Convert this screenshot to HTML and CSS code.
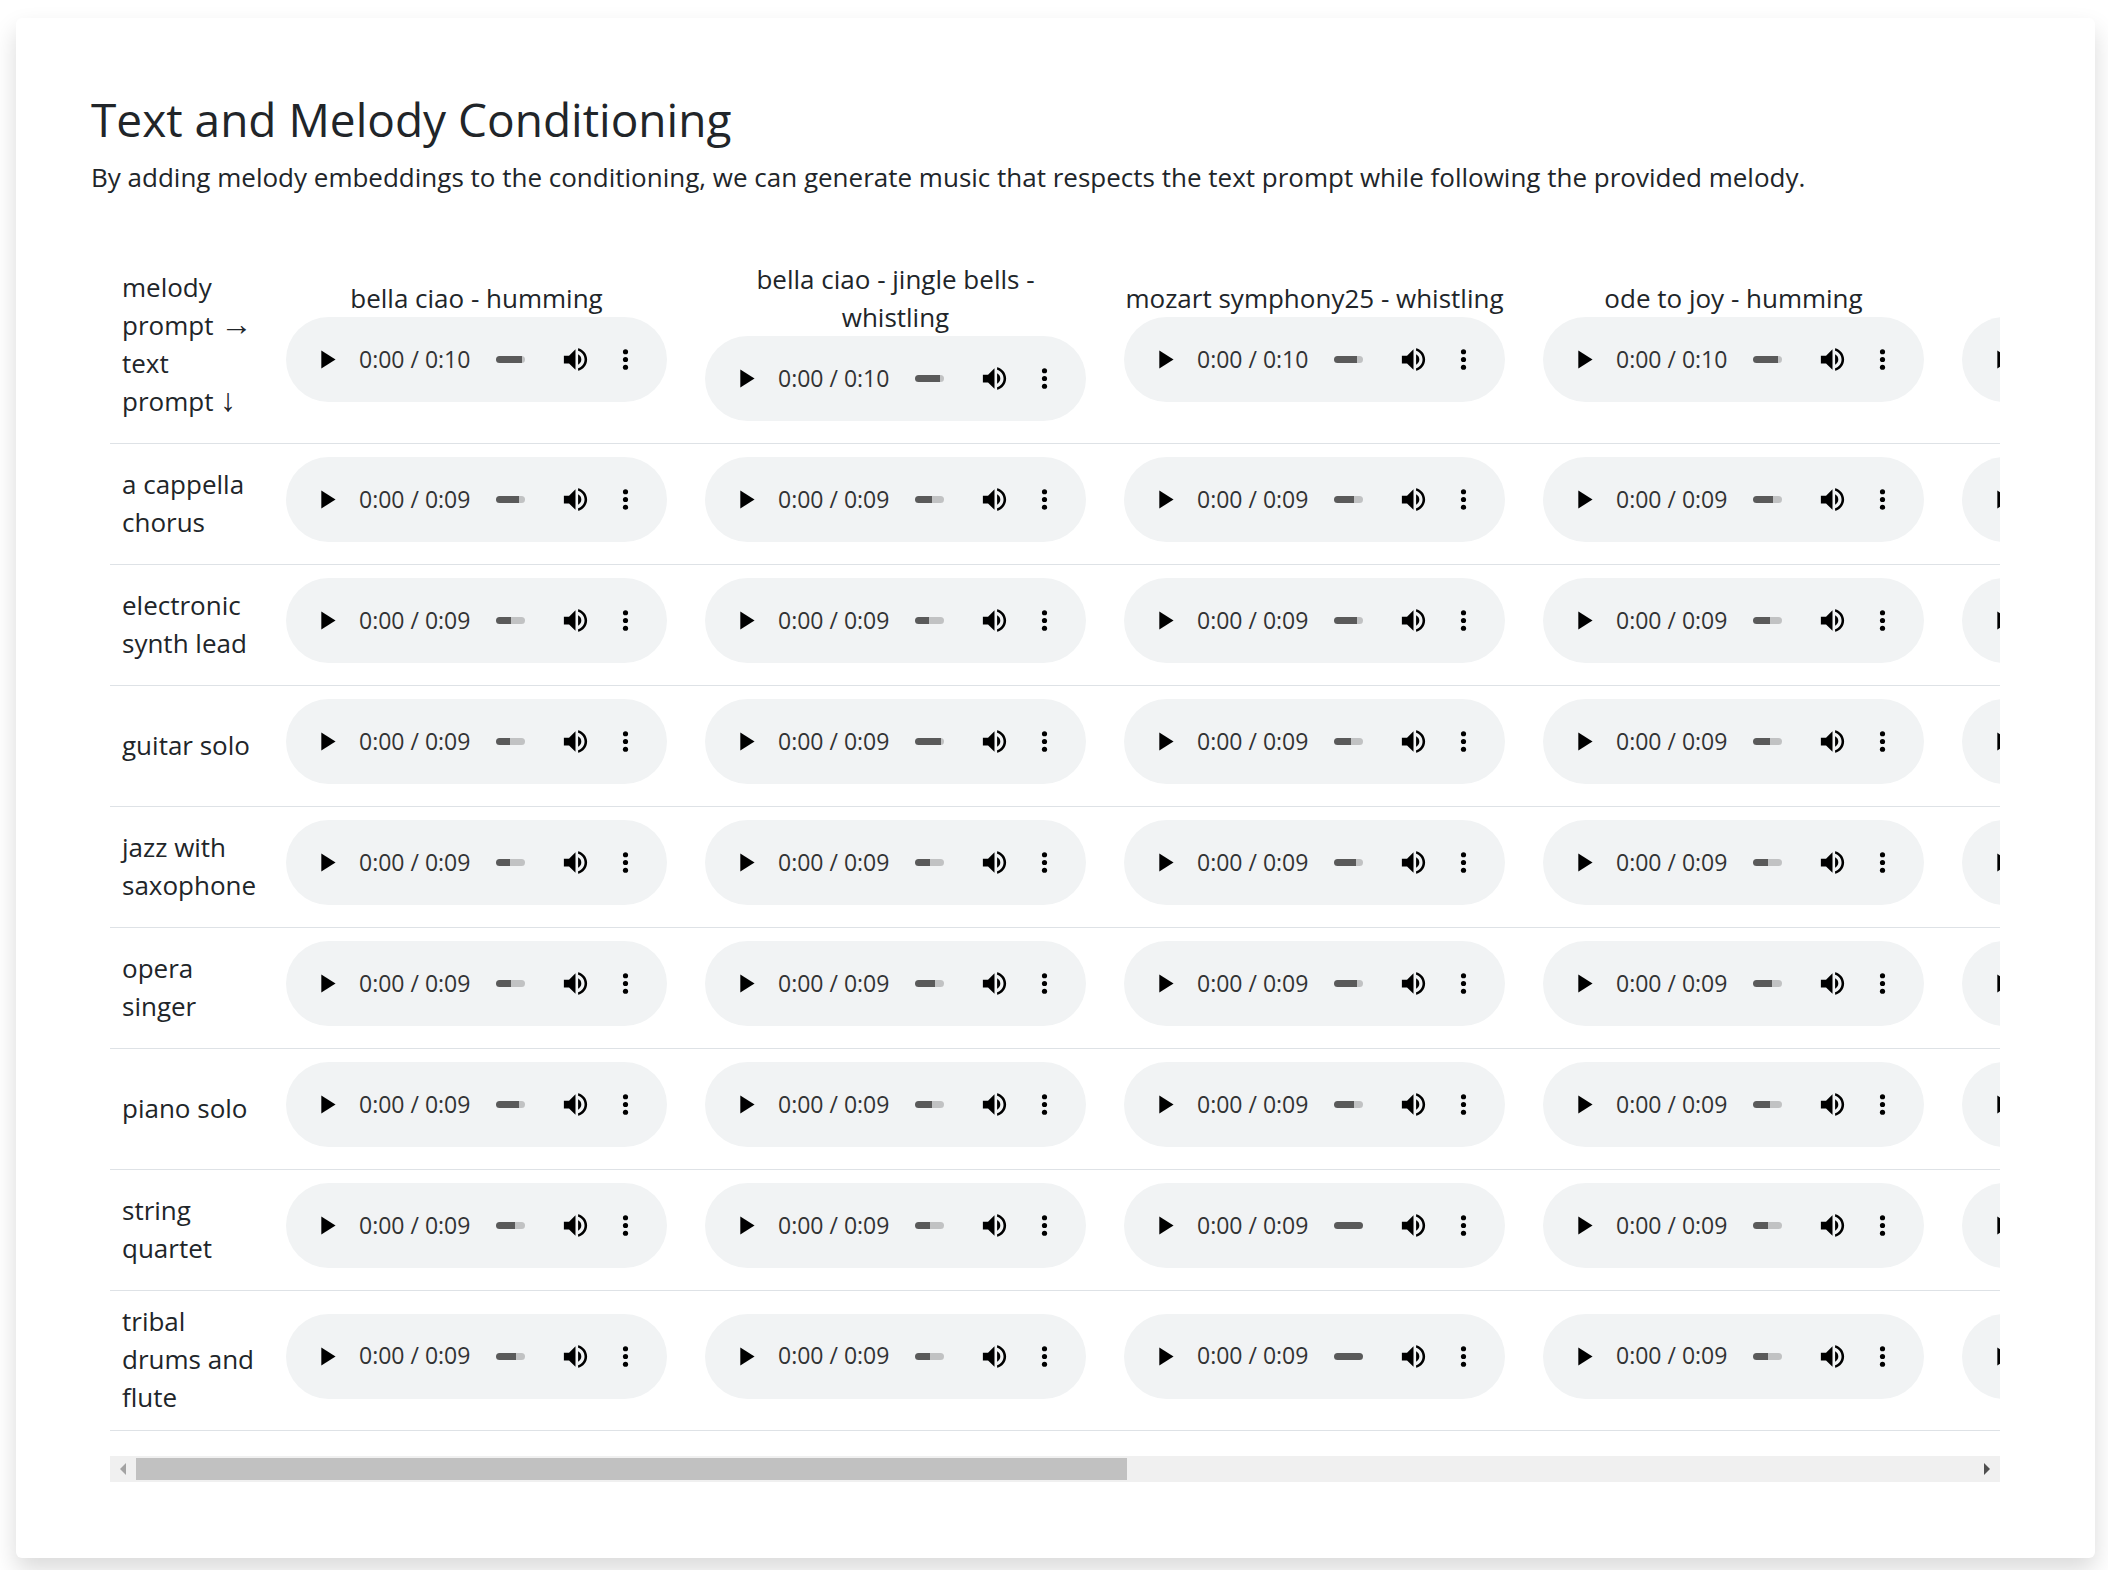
FILE: index.html
```html
<!DOCTYPE html>
<html lang="en">
<head>
<meta charset="utf-8">
<meta name="viewport" content="width=device-width, initial-scale=1">
<title>Text and Melody Conditioning</title>
<link rel="stylesheet" href="styles.css">
</head>
<body>
<svg class="sprite" aria-hidden="true">
  <symbol id="icon-play" viewBox="0 0 24 24"><path d="M8 5v14l11-7z"/></symbol>
  <symbol id="icon-volume" viewBox="0 0 24 24"><path d="M3 9v6h4l5 5V4L7 9H3zm13.500 3c0-1.770-1.020-3.290-2.500-4.030v8.050c1.480-.730 2.500-2.250 2.500-4.020zM14 3.230v2.060c2.890.860 5 3.540 5 6.710s-2.110 5.850-5 6.710v2.060c4.010-.910 7-4.490 7-8.770s-2.990-7.860-7-8.770z"/></symbol>
  <symbol id="icon-menu" viewBox="0 0 24 24"><circle cx="12" cy="6" r="2"/><circle cx="12" cy="12" r="2"/><circle cx="12" cy="18" r="2"/></symbol>
</svg>
<main class="card">
  <h1 class="title">Text and Melody Conditioning</h1>
  <p class="lead">By adding melody embeddings to the conditioning, we can generate music that respects the text prompt while following the provided melody.</p>
  <section class="samples" aria-label="Audio samples">
    <div class="viewport">
      <table class="grid">
        <thead>
          <tr id="melodies">
            <th class="prompt" scope="col">melody prompt <span class="arrow">→</span> text prompt <span class="arrow">↓</span></th>
          </tr>
        </thead>
        <tbody id="rows"></tbody>
      </table>
    </div>
    <div class="scrollbar">
      <button class="scroll-button" type="button" aria-label="Scroll left" disabled><svg class="scroll-arrow" viewBox="0 0 6 12"><path d="M6 0v12L0 6z"/></svg></button>
      <div class="track"><div class="thumb"></div></div>
      <button class="scroll-button" type="button" aria-label="Scroll right"><svg class="scroll-arrow" viewBox="0 0 6 12"><path d="M0 0v12l6-6z"/></svg></button>
    </div>
  </section>
</main>
<script src="script.js"></script>
</body>
</html>
```
FILE: styles.css
```css
* {
  box-sizing: border-box;
}

body {
  margin: 0;
  padding: 18px 13px 12px 16px;
  background: #fff;
  color: #212529;
  font-family: "Segoe UI", "Open Sans", "Noto Sans", sans-serif;
  font-size: 26px;
  line-height: 38px;
}

.sprite {
  display: none;
}

.card {
  padding: 72px 75px 76px;
  border-radius: 6px;
  background: #fff;
  box-shadow: 0 12px 24px rgba(0, 0, 0, 0.15);
}

.title {
  margin: 0 0 10px;
  font-size: 46px;
  font-weight: 400;
  line-height: 58px;
}

.lead {
  margin: 0 0 51px;
}

.samples {
  padding: 0 20px 0 19px;
}

.viewport {
  overflow: hidden;
}

.grid {
  width: max-content;
  margin-bottom: 25px;
  border-collapse: separate;
  border-spacing: 0;
  table-layout: fixed;
}

.grid th,
.grid td {
  padding: 13px 19px 12px;
  border-bottom: 1px solid #dee2e6;
  font-weight: 400;
  vertical-align: middle;
}

.grid .prompt {
  width: 157px;
  padding: 11px 8px 14px 12px;
  text-align: left;
}

.arrow {
  font-family: "Liberation Sans", Arial, sans-serif;
  font-size: 32px;
  line-height: 0;
}

.melody-name {
  min-height: 38px;
  white-space: pre-line;
}

.player {
  display: flex;
  align-items: center;
  width: 381px;
  height: 85px;
  margin-bottom: 10px;
  padding: 0 26px 0 25px;
  border-radius: 43px;
  background: #f1f3f4;
}

.icon-button {
  display: block;
  flex: none;
  width: 31px;
  height: 31px;
  padding: 0;
  border: 0;
  background: none;
  color: #000;
}

.icon {
  display: block;
  width: 31px;
  height: 31px;
  fill: currentColor;
}

.time {
  flex: none;
  width: 137px;
  margin-left: 17px;
  padding-bottom: 2px;
  color: #323334;
  font-size: 23px;
  text-align: left;
}

.timeline {
  flex: 1;
  min-width: 0;
  height: 7px;
  margin: 0 35px 0 0;
  appearance: none;
  border-radius: 4px;
  background: linear-gradient(to right, #5a5a5a var(--buffered), #c1c2c3 var(--buffered));
}

.timeline::-webkit-slider-thumb {
  appearance: none;
  width: 0;
  height: 0;
}

.menu-button {
  margin-left: 19px;
}

.scrollbar {
  display: flex;
  height: 26px;
  background: #f0f0f0;
}

.scroll-button {
  display: flex;
  align-items: center;
  justify-content: center;
  width: 26px;
  padding: 0;
  border: 0;
  background: none;
  color: #505050;
}

.scroll-button:disabled {
  color: #a3a3a3;
}

.scroll-arrow {
  width: 6px;
  height: 12px;
  fill: currentColor;
}

.track {
  flex: 1;
  padding: 2px 0;
}

.thumb {
  width: 53.9%;
  height: 22px;
  background: #c1c1c1;
}
```
FILE: script.js
```js
// Each number is the share of the clip that has been buffered, in percent.
const melodies = [
  { name: "bella ciao - humming", time: "0:00 / 0:10", buffered: 90 },
  { name: "bella ciao - jingle bells -\nwhistling", time: "0:00 / 0:10", buffered: 87 },
  { name: "mozart symphony25 - whistling", time: "0:00 / 0:10", buffered: 80 },
  { name: "ode to joy - humming", time: "0:00 / 0:10", buffered: 86 },
  { name: "", time: "", buffered: 0 }
];

const prompts = [
  { name: "a cappella chorus", buffered: [79, 59, 69, 69, 0] },
  { name: "electronic synth lead", buffered: [51, 48, 80, 58, 0] },
  { name: "guitar solo", buffered: [48, 90, 59, 58, 0] },
  { name: "jazz with saxophone", buffered: [48, 50, 77, 52, 0] },
  { name: "opera singer", buffered: [51, 70, 80, 65, 0] },
  { name: "piano solo", buffered: [78, 59, 69, 58, 0] },
  { name: "string quartet", buffered: [65, 51, 100, 52, 0] },
  { name: "tribal drums and flute", buffered: [68, 51, 100, 52, 0] }
];

const iconButton = (icon, label, extra = "") =>
  `<button class="icon-button ${extra}" type="button" aria-label="${label}"><svg class="icon"><use href="#icon-${icon}"/></svg></button>`;

const player = (time, buffered) =>
  `<div class="player">
    ${iconButton("play", "Play")}
    <span class="time">${time}</span>
    <input class="timeline" type="range" min="0" max="100" value="0" aria-label="Position" style="--buffered: ${buffered}%">
    ${iconButton("volume", "Mute")}
    ${iconButton("menu", "More options", "menu-button")}
  </div>`;

document.getElementById("melodies").insertAdjacentHTML("beforeend", melodies.map(m =>
  `<th class="melody" scope="col"><div class="melody-name">${m.name}</div>${player(m.time, m.buffered)}</th>`).join(""));

// A clip that has not started to load shows no time yet.
document.getElementById("rows").innerHTML = prompts.map(p =>
  `<tr><th class="prompt" scope="row">${p.name}</th>${p.buffered.map(b => `<td>${player(b ? "0:00 / 0:09" : "", b)}</td>`).join("")}</tr>`).join("");
```
